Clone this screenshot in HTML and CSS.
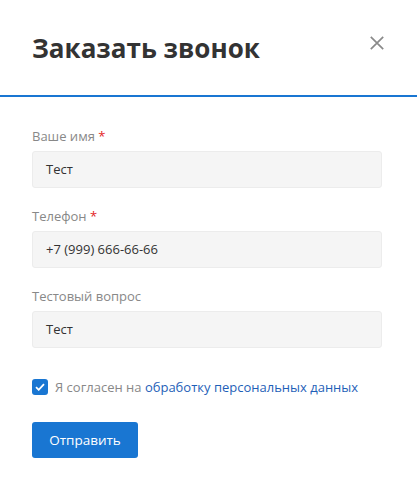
FILE: index.html
```html
<!DOCTYPE html>
<html lang="ru">
<head>
<meta charset="utf-8">
<link rel="stylesheet" href="styles.css">
</head>
<body>
<div class="modal">
  <div class="modal-header">
    <h1 class="modal-title">Заказать звонок</h1>
    <button class="close" aria-label="Закрыть">
      <svg width="14" height="14" viewBox="0 0 14 14"><path d="M0.8 0.8L13.2 13.2M13.2 0.8L0.8 13.2" stroke="#8a8a8a" stroke-width="1.7" fill="none"/></svg>
    </button>
  </div>
  <form class="modal-body">
    <div class="field">
      <label class="label">Ваше имя <span class="req">*</span></label>
      <div class="input">Тест</div>
    </div>
    <div class="field">
      <label class="label">Телефон <span class="req">*</span></label>
      <div class="input">+7 (999) 666-66-66</div>
    </div>
    <div class="field">
      <label class="label">Тестовый вопрос</label>
      <div class="input">Тест</div>
    </div>
    <div class="agree">
      <span class="checkbox">
        <svg width="10" height="8" viewBox="0 0 10 8"><path d="M1 4.2L3.7 6.8L9 1.2" stroke="#fff" stroke-width="1.8" fill="none"/></svg>
      </span>
      <span class="agree-text">Я согласен на <a class="link">обработку персональных данных</a></span>
    </div>
    <button type="button" class="submit">Отправить</button>
  </form>
</div>
</body>
</html>
```
FILE: styles.css
```css
* { box-sizing: border-box; }
html, body { margin: 0; padding: 0; background: #fff; }
body { font-family: "Open Sans", "Liberation Sans", sans-serif; color: #333; }
.modal { width: 417px; }
.modal-header {
  display: flex;
  justify-content: space-between;
  align-items: flex-start;
  padding: 30px 33px 0 32px;
  height: 97px;
  border-bottom: 2px solid #1976d2;
}
.modal-title {
  margin: 0;
  font-size: 26px;
  line-height: 36px;
  font-weight: 700;
  color: #333;
}
.close {
  border: 0;
  background: none;
  padding: 0;
  margin: 6px 0 0 0;
  width: 14px;
  height: 14px;
  display: flex;
}
.modal-body { padding: 30px 35px 0 32px; display: flex; flex-direction: column; }
.field { display: flex; flex-direction: column; margin-bottom: 19px; }
.label {
  font-size: 13px;
  line-height: 18px;
  color: #888;
  margin-bottom: 6px;
}
.req { color: #e31e24; }
.input {
  height: 37px;
  background: #f5f5f5;
  border: 1px solid #ececec;
  border-radius: 3px;
  padding: 0 13px;
  font-size: 13px;
  line-height: 35px;
  color: #333;
}
.agree { display: flex; align-items: center; gap: 7px; margin-top: 11px; }
.checkbox {
  width: 16px; height: 16px;
  border-radius: 3px;
  background: #1976d2;
  display: flex; align-items: center; justify-content: center;
}
.agree-text { font-size: 13px; line-height: 18px; color: #888; }
.link { color: #1f5fb8; text-decoration: none; }
.submit {
  margin-top: 26px;
  align-self: flex-start;
  width: 106px;
  height: 36px;
  border: 0;
  border-radius: 3px;
  background: #1976d2;
  color: #fff;
  font-family: "Open Sans", "Liberation Sans", sans-serif;
  font-size: 13.5px;
}
```
